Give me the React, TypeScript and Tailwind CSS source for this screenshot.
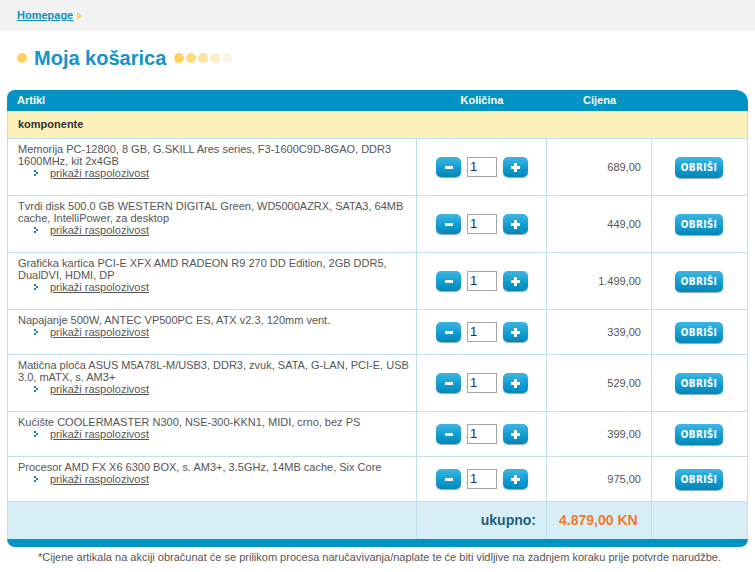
import { Fragment } from 'react';

interface CartItem {
  id: number;
  name: string;
  price: string;
}

const items: CartItem[] = [
  { id: 1, name: 'Memorija PC-12800, 8 GB, G.SKILL Ares series, F3-1600C9D-8GAO, DDR3 1600MHz, kit 2x4GB', price: '689,00' },
  { id: 2, name: 'Tvrdi disk 500.0 GB WESTERN DIGITAL Green, WD5000AZRX, SATA3, 64MB cache, IntelliPower, za desktop', price: '449,00' },
  { id: 3, name: 'Grafička kartica PCI-E XFX AMD RADEON R9 270 DD Edition, 2GB DDR5, DualDVI, HDMI, DP', price: '1.499,00' },
  { id: 4, name: 'Napajanje 500W, ANTEC VP500PC ES, ATX v2.3, 120mm vent.', price: '339,00' },
  { id: 5, name: 'Matična ploča ASUS M5A78L-M/USB3, DDR3, zvuk, SATA, G-LAN, PCI-E, USB 3.0, mATX, s. AM3+', price: '529,00' },
  { id: 6, name: 'Kućište COOLERMASTER N300, NSE-300-KKN1, MIDI, crno, bez PS', price: '399,00' },
  { id: 7, name: 'Procesor AMD FX X6 6300 BOX, s. AM3+, 3.5GHz, 14MB cache, Six Core', price: '975,00' },
];

const font = { fontFamily: '"Liberation Sans", Arial, sans-serif' };

function BlueButton({ children, className }: { children: React.ReactNode; className: string }) {
  return (
    <button
      className={`flex items-center justify-center rounded-[5px] bg-gradient-to-b from-[#3cb6e2] via-[#139fd3] to-[#0386b7] text-white font-bold shadow-[0_1px_1px_rgba(0,60,90,0.45)] ${className}`}
    >
      {children}
    </button>
  );
}

function Bullet() {
  return (
    <svg width="5" height="6" viewBox="0 0 5 6" className="mr-[11px]">
      <rect x="0" y="0" width="2" height="2" fill="#1b7fa3" />
      <rect x="2" y="2" width="2" height="2" fill="#1b7fa3" />
      <rect x="0" y="4" width="2" height="2" fill="#1b7fa3" />
    </svg>
  );
}

export default function App() {
  return (
    <div className="w-[755px] min-h-[572px] bg-white text-[11px] text-[#555]" style={font}>
      {/* Breadcrumb */}
      <div className="h-[31px] bg-[#f2f2f2] flex items-center pl-[17px]">
        <a className="font-bold text-[#0b8fc2] underline leading-none">Homepage</a>
        <span className="ml-[4px] w-0 h-0 border-y-[4px] border-y-transparent border-l-[5px] border-l-[#fdd35f]" />
      </div>

      {/* Title */}
      <div className="flex items-center h-[52px] pl-[17px] pt-[2px]">
        <span className="w-[10px] h-[10px] rounded-full bg-[#fdd35f]" />
        <h1 className="ml-[7px] text-[20px] font-bold text-[#1593c9] leading-none">Moja košarica</h1>
        <div className="flex gap-[2px] ml-[8px]">
          <span className="w-[10px] h-[10px] rounded-full bg-[#fdd35f]" />
          <span className="w-[10px] h-[10px] rounded-full bg-[#fddb7c]" />
          <span className="w-[10px] h-[10px] rounded-full bg-[#fee3a0]" />
          <span className="w-[10px] h-[10px] rounded-full bg-[#feecc2]" />
          <span className="w-[10px] h-[10px] rounded-full bg-[#fef5e1]" />
        </div>
      </div>

      {/* Cart table */}
      <div className="ml-[7px] w-[741px] mt-[7px]">
        <div className="grid grid-cols-[410px_130px_105px_96px] h-[21px] bg-[#0093c3] rounded-tl-[8px] rounded-tr-[12px] text-white font-bold items-center">
          <div className="pl-[10px]">Artikl</div>
          <div className="text-center">Količina</div>
          <div className="text-center">Cijena</div>
          <div />
        </div>
        <div className="border-x border-[#bfe1ef]">
          <div className="h-[28px] bg-[#fdf1b9] flex items-center pl-[10px] font-bold text-[#333] border-b border-[#bfe1ef]">
            komponente
          </div>
          {items.map((item) => (
            <Fragment key={item.id}>
              <div className="grid grid-cols-[409px_130px_105px_95px] border-b border-[#bfe1ef]">
                <div className="pl-[10px] pr-[6px] pt-[4px] pb-[16px] leading-[12px] border-r border-[#bfe1ef]">
                  <div>{item.name}</div>
                  <div className="flex items-center pl-[16px]">
                    <Bullet />
                    <a className="underline">prikaži raspolozivost</a>
                  </div>
                </div>
                <div className="flex items-center justify-center gap-[6px] border-r border-[#bfe1ef] pl-[1px]">
                  <BlueButton className="w-[25px] h-[20px] text-[14px] leading-none">
                    <span className="block w-[8px] h-[3px] bg-white" />
                  </BlueButton>
                  <div className="w-[30px] h-[20px] border border-[#a5a5a5] bg-white flex items-center pl-[2px] text-[13px] text-[#102a6b]">
                    1
                  </div>
                  <BlueButton className="w-[25px] h-[20px] text-[16px] leading-none">
                    <span className="relative block w-[9px] h-[9px]">
                      <span className="absolute left-0 top-[3px] w-[9px] h-[3px] bg-white" />
                      <span className="absolute top-0 left-[3px] w-[3px] h-[9px] bg-white" />
                    </span>
                  </BlueButton>
                </div>
                <div className="flex items-center justify-end pr-[10px] border-r border-[#bfe1ef]">{item.price}</div>
                <div className="flex items-center justify-center pr-[1px]">
                  <BlueButton className="w-[48px] h-[21px] text-[10px] tracking-[0.3px]">
                    <span style={{ fontFamily: '"DejaVu Sans Condensed", "DejaVu Sans", sans-serif', fontStretch: 'condensed' }}>OBRIŠI</span>
                  </BlueButton>
                </div>
              </div>
            </Fragment>
          ))}
          <div className="grid grid-cols-[409px_130px_105px_95px] h-[37px] bg-[#d8eef7]">
            <div className="border-r border-[#bfe1ef]" />
            <div className="flex items-center justify-end pr-[10px] border-r border-[#bfe1ef] text-[14px] font-bold text-[#1d5f7a]">
              ukupno:
            </div>
            <div className="flex items-center pl-[12px] border-r border-[#bfe1ef] text-[14px] font-bold text-[#f07a2c]">
              4.879,00 KN
            </div>
            <div />
          </div>
        </div>
        <div className="h-[8px] bg-[#0093c3] rounded-bl-[10px] rounded-br-[10px]" />
      </div>

      <p className="mt-[2px] text-center text-[#555] pl-[4px]">
        *Cijene artikala na akciji obračunat će se prilikom procesa naručavivanja/naplate te će biti vidljive na zadnjem koraku prije potvrde narudžbe.
      </p>
    </div>
  );
}
